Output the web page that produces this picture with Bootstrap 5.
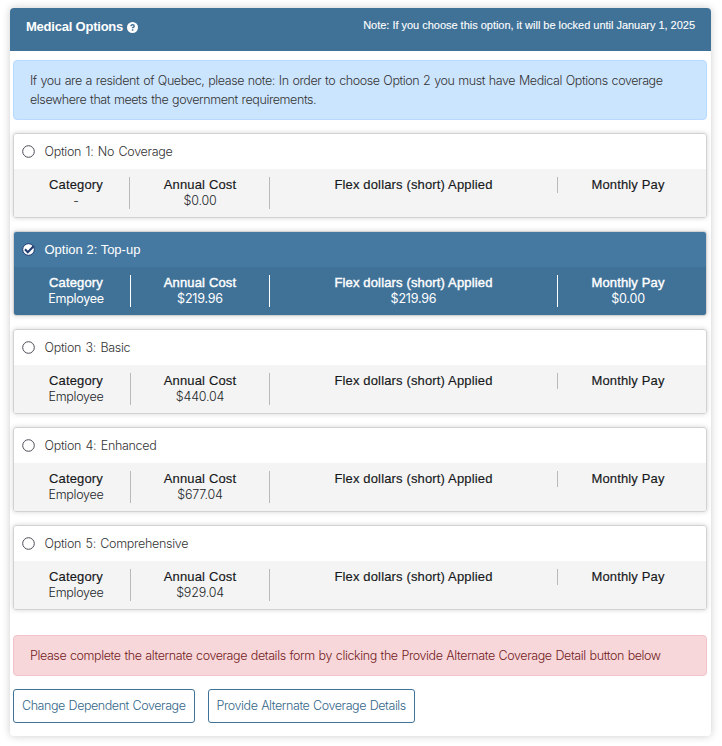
<!DOCTYPE html>
<html lang="en">
<head>
<meta charset="utf-8">
<meta name="viewport" content="width=device-width, initial-scale=1">
<title>Medical Options</title>
<link href="https://cdn.jsdelivr.net/npm/bootstrap@5.3.0/dist/css/bootstrap.min.css" rel="stylesheet">
<style>
body{font-family:Inter,"Liberation Sans",sans-serif;font-size:12.5px;font-weight:300;letter-spacing:-.3px;line-height:16px;color:#212529;background:#fff;padding:8px 11px 10px 10px}
.panel{height:728px;border-radius:4px;box-shadow:0 0 8px rgba(0,0,0,.2);padding-bottom:13px}
.panel-top{height:43px;background:#407298;border-radius:4px 4px 0 0;padding:10px 16px;color:#fff;font-family:"Liberation Sans",Arial,sans-serif}
.panel-title{font-size:13px;font-weight:700;line-height:18px;letter-spacing:-.22px}
.panel-note{font-size:11px;font-weight:400;line-height:15px;letter-spacing:-.02px;-webkit-text-stroke:.1px}
.panel-main{padding:9px 4px 0 3px}
.notice{border-radius:4px;padding:10px 16px;line-height:19px;margin-bottom:13px;white-space:nowrap}
.notice-info{background:#cce5ff;border:1px solid #b8daff;color:#333;letter-spacing:-.41px;word-spacing:.7px}
.notice-danger{background:#f8d7da;border:1px solid #f1c3c8;color:#721c24;margin-top:25px;letter-spacing:-.41px;word-spacing:.7px}
.option{height:85px;border:1px solid #d2d2d2;border-radius:3px;box-shadow:0 0 5px rgba(0,0,0,.17);margin-bottom:13px;overflow:hidden}
.option-top{height:35px;padding-left:8px;color:#333;letter-spacing:-.3px;word-spacing:1.2px}
.option-top svg{margin-right:9.5px}
.option-data{display:grid;grid-template-columns:117px 139px 288px 1fr;background:#f4f4f4;height:48px;padding-top:8px;text-align:center}
.no-category .option-data{grid-template-columns:116px 140px 288px 1fr}
.cell{border-right:1px solid #b9b9b9;align-self:start;padding-left:8px}
.no-category .cell:first-child{padding-left:9px}
.cell:nth-child(2),.cell:nth-child(3){padding-left:0}
.no-category .cell:nth-child(2){padding-left:1px}
.cell:last-child{border:0;padding:0 8px 0 0}
.cell-label{font:400 13px/16px "Liberation Sans",Arial,sans-serif;letter-spacing:.15px;color:#16181b;-webkit-text-stroke:.15px}
.amount{letter-spacing:-.2px}
.picked .option-top{background:#4679a1;color:#fff;font-family:"Liberation Sans",Arial,sans-serif;font-size:13px;font-weight:400;letter-spacing:0;word-spacing:0}
.picked .option-data{background:#407298;color:#fff;font-weight:400}
.picked .cell-label{color:#fff;-webkit-text-stroke:.4px}
.picked .cell{border-color:#fff}
.action{height:34px;border:1px solid #407298;border-radius:3px;color:#336689;font-size:12.5px;font-weight:300;letter-spacing:-.43px;word-spacing:.6px;padding:0 8px;line-height:30px}
.action-row{gap:13px}
</style>
</head>
<body>
<main class="panel">
<header class="panel-top d-flex justify-content-between"><div class="panel-title d-flex align-items-center align-self-start">Medical Options
<svg class="ms-1" width="11" height="11" viewBox="0 0 11 11"><circle cx="5.5" cy="5.5" r="5.5" fill="#fff"/><path d="M3.8 4.1Q4.2 2.8 5.6 2.8Q7.2 2.8 7.2 4.2Q7.2 5.1 5.6 5.7V6.3M5.6 7.3V8.7" fill="none" stroke="#407298" stroke-width="1.5"/></svg></div><div class="panel-note">Note: If you choose this option, it will be locked until January 1, 2025</div></header>
<div class="panel-main">
<div class="notice notice-info">If you are a resident of Quebec, please note: In order to choose Option 2 you must have Medical Options coverage<br>elsewhere that meets the government requirements.</div>

<section class="option no-category"><div class="option-top d-flex align-items-center"><svg width="13" height="13" viewBox="0 0 13 13"><circle cx="6.5" cy="6.5" r="5.8" fill="#fff" stroke="#4b4d58"/></svg><span>Option 1: No Coverage</span></div>
<div class="option-data"><div class="cell"><div class="cell-label">Category</div><div>-</div></div><div class="cell"><div class="cell-label">Annual Cost</div><div class="amount">$0.00</div></div><div class="cell"><div class="cell-label">Flex dollars (short) Applied</div></div><div class="cell"><div class="cell-label">Monthly Pay</div></div></div></section>

<section class="option picked"><div class="option-top d-flex align-items-center"><svg width="13" height="13" viewBox="0 0 13 13"><circle cx="6.5" cy="6.5" r="5.8" fill="#fff" stroke="#1f3a70"/><path d="M3 6.2L5.8 9.2L11.8 3" fill="none" stroke="#1f3a70" stroke-width="2"/></svg><span>Option 2: Top-up</span></div>
<div class="option-data"><div class="cell"><div class="cell-label">Category</div><div>Employee</div></div><div class="cell"><div class="cell-label">Annual Cost</div><div class="amount">$219.96</div></div><div class="cell"><div class="cell-label">Flex dollars (short) Applied</div><div class="amount">$219.96</div></div><div class="cell"><div class="cell-label">Monthly Pay</div><div class="amount">$0.00</div></div></div></section>

<section class="option"><div class="option-top d-flex align-items-center"><svg width="13" height="13" viewBox="0 0 13 13"><circle cx="6.5" cy="6.5" r="5.8" fill="#fff" stroke="#4b4d58"/></svg><span>Option 3: Basic</span></div>
<div class="option-data"><div class="cell"><div class="cell-label">Category</div><div>Employee</div></div><div class="cell"><div class="cell-label">Annual Cost</div><div class="amount">$440.04</div></div><div class="cell"><div class="cell-label">Flex dollars (short) Applied</div></div><div class="cell"><div class="cell-label">Monthly Pay</div></div></div></section>

<section class="option"><div class="option-top d-flex align-items-center"><svg width="13" height="13" viewBox="0 0 13 13"><circle cx="6.5" cy="6.5" r="5.8" fill="#fff" stroke="#4b4d58"/></svg><span>Option 4: Enhanced</span></div>
<div class="option-data"><div class="cell"><div class="cell-label">Category</div><div>Employee</div></div><div class="cell"><div class="cell-label">Annual Cost</div><div class="amount">$677.04</div></div><div class="cell"><div class="cell-label">Flex dollars (short) Applied</div></div><div class="cell"><div class="cell-label">Monthly Pay</div></div></div></section>

<section class="option"><div class="option-top d-flex align-items-center"><svg width="13" height="13" viewBox="0 0 13 13"><circle cx="6.5" cy="6.5" r="5.8" fill="#fff" stroke="#4b4d58"/></svg><span>Option 5: Comprehensive</span></div>
<div class="option-data"><div class="cell"><div class="cell-label">Category</div><div>Employee</div></div><div class="cell"><div class="cell-label">Annual Cost</div><div class="amount">$929.04</div></div><div class="cell"><div class="cell-label">Flex dollars (short) Applied</div></div><div class="cell"><div class="cell-label">Monthly Pay</div></div></div></section>

<div class="notice notice-danger">Please complete the alternate coverage details form by clicking the Provide Alternate Coverage Detail button below</div>
<div class="action-row d-flex"><button class="btn action" type="button">Change Dependent Coverage</button><button class="btn action" type="button">Provide Alternate Coverage Details</button></div>
</div>
</main>
<script src="https://cdn.jsdelivr.net/npm/bootstrap@5.3.0/dist/js/bootstrap.bundle.min.js"></script>
</body>
</html>
